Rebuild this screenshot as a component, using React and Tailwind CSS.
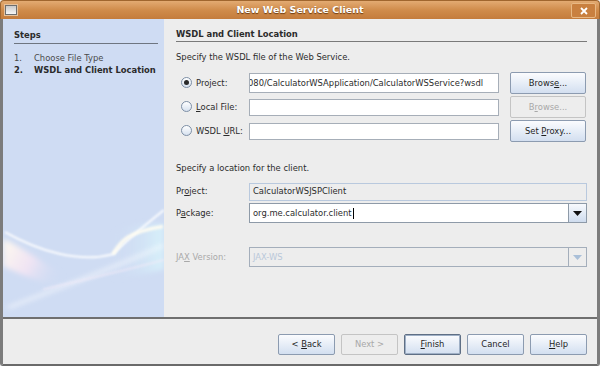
import React from "react";

const font = { fontFamily: '"DejaVu Sans", sans-serif' };

function U({ children }) {
  return <span className="underline underline-offset-1">{children}</span>;
}

function Btn({ children, disabled, main, className = "" }) {
  return (
    <div
      className={`flex items-center justify-center rounded-[2px] border ${
        disabled
          ? "border-[#c4c4c4] bg-[#ededed] text-[#a8a8a8]"
          : main
          ? "border-[#5f6f85] bg-gradient-to-b from-[#fbfcfe] to-[#d3dff0] text-[#1e1e1e] shadow-[inset_0_0_0_1px_#9fb0c6]"
          : "border-[#8c9bb0] bg-gradient-to-b from-[#fbfcfe] to-[#d3dff0] text-[#1e1e1e]"
      } ${className}`}
    >
      <span className="whitespace-pre">{children}</span>
    </div>
  );
}

function Radio({ checked }) {
  return (
    <div className="flex h-[11px] w-[11px] items-center justify-center rounded-full border border-[#7d8fa6] bg-gradient-to-b from-[#ffffff] to-[#d6e1ef]">
      {checked && <div className="h-[5px] w-[5px] rounded-full bg-[#2a2a2a]" />}
    </div>
  );
}

function Arrow({ light }) {
  return (
    <svg width="9" height="5" viewBox="0 0 9 5">
      <path d="M0 0 H9 L4.5 5 Z" fill={light ? "#a9bfd8" : "#111"} />
    </svg>
  );
}

function Swoosh() {
  return (
    <svg className="h-full w-full" viewBox="0 0 161 130" preserveAspectRatio="none">
      <defs>
        <linearGradient id="pk" x1="0" y1="0" x2="1" y2="0.4">
          <stop offset="0" stopColor="#fffbef" stopOpacity="1" />
          <stop offset="0.5" stopColor="#f8e6f3" stopOpacity="0.8" />
          <stop offset="1" stopColor="#cfdcf3" stopOpacity="0" />
        </linearGradient>
        <linearGradient id="cy" x1="0" y1="0" x2="1" y2="0">
          <stop offset="0" stopColor="#cfdcf3" stopOpacity="0" />
          <stop offset="1" stopColor="#d8f2fb" stopOpacity="1" />
        </linearGradient>
        <filter id="bl"><feGaussianBlur stdDeviation="1.2" /></filter>
        <filter id="bl2"><feGaussianBlur stdDeviation="3" /></filter>
      </defs>
      <path d="M0 45 L0 75 C20 85 45 95 65 100 L70 92 C45 75 20 55 0 45 Z" fill="url(#pk)" filter="url(#bl2)" />
      <path d="M110 40 C125 30 145 28 161 30 L161 78 C140 85 120 85 110 90 Z" fill="url(#cy)" filter="url(#bl2)" />
      <path d="M2 38 C35 58 75 72 110 62 C125 45 140 32 161 14" stroke="#ffffff" strokeWidth="2.2" fill="none" filter="url(#bl)" opacity="0.9" />
      <path d="M110 62 C118 48 124 38 160 32" stroke="#fffdf2" strokeWidth="4" fill="none" filter="url(#bl)" opacity="0.9" />
      <path d="M5 120 C50 100 95 85 161 52" stroke="#ffffff" strokeWidth="3" fill="none" filter="url(#bl2)" opacity="0.7" />
      <path d="M40 100 C80 90 120 80 161 68" stroke="#f6ecf8" strokeWidth="2" fill="none" filter="url(#bl)" opacity="0.6" />
    </svg>
  );
}

export default function App() {
  return (
    <div className="flex h-[366px] w-[600px] flex-col bg-[#ededed] text-[8.4px] text-[#2b2b2b]" style={font}>
      {/* title bar */}
      <div className="relative flex h-[19px] shrink-0 items-center justify-center rounded-t-[4px] border border-b-0 border-[#a0662e] bg-gradient-to-b from-[#e3ab72] via-[#d08c4b] to-[#c47c3c]">
        <div className="absolute left-[4px] top-[4px] h-[10px] w-[12px] border border-[#6e6e6e] bg-gradient-to-b from-[#c9c9c9] to-[#f6f6f6] shadow-[0_0_0_1px_#e6c29c]" />
        <span className="text-[9.5px] font-bold text-white [text-shadow:0_1px_1px_#6b3a12]">New Web Service Client</span>
        <div className="absolute right-[3px] top-[2px] flex h-[15px] w-[25px] items-center justify-center rounded-[2px] border border-[#e8b883] bg-[#c9803f]">
          <svg width="8" height="8" viewBox="0 0 8 8">
            <path d="M1 1 L7 7 M7 1 L1 7" stroke="#fff" strokeWidth="1.8" />
          </svg>
        </div>
      </div>

      {/* body */}
      <div className="flex flex-1 flex-col rounded-b-[3px] border-x-[3px] border-b-[2px] border-x-[#7c7c7c] border-b-[#6a6a6a]">
        <div className="flex h-[300px] border-b-2 border-[#6f6f6f]">
          {/* steps */}
          <div className="flex w-[161px] flex-col bg-[#cfdcf3]">
            <div className="pl-[11px] pr-[6px] pt-[10px]">
              <div className="border-b border-[#6e7580] pb-[2px] font-bold leading-[12px]">Steps</div>
              <div className="mt-[8px] flex whitespace-nowrap leading-[12px] text-[#4a4a4a]">
                <span className="w-[20px]">1.</span>
                <span>Choose File Type</span>
              </div>
              <div className="flex whitespace-nowrap font-bold leading-[12px]">
                <span className="w-[20px]">2.</span>
                <span>WSDL and Client Location</span>
              </div>
            </div>
            <div className="mt-auto h-[120px]">
              <Swoosh />
            </div>
          </div>

          {/* content */}
          <div className="flex flex-1 flex-col pl-[12px] pr-[10px] pt-[9px]">
            <div className="border-b border-[#7a7a7a] pb-[1px] font-bold leading-[12px]">WSDL and Client Location</div>
            <div className="mt-[9px] leading-[12px]">Specify the WSDL file of the Web Service.</div>

            <div className="mt-[9px] flex h-[22px] items-center">
              <div className="flex w-[73px] items-center gap-[4px] pl-[5px]">
                <Radio checked />
                <span>Project:</span>
              </div>
              <div className="flex h-[20px] w-[250px] items-center overflow-hidden whitespace-nowrap border border-[#a6aeb8] bg-white px-[2px]">
                <span className="-ml-[4px]">080/CalculatorWSApplication/CalculatorWSService?wsdl</span>
              </div>
              <Btn className="ml-[11px] h-[22px] w-[76px]">Brows<U>e</U>...</Btn>
            </div>

            <div className="mt-[2px] flex h-[22px] items-center">
              <div className="flex w-[73px] items-center gap-[4px] pl-[5px]">
                <Radio />
                <span><U>L</U>ocal File:</span>
              </div>
              <div className="h-[17px] w-[250px] border border-[#a6aeb8] bg-white" />
              <Btn disabled className="ml-[11px] h-[22px] w-[76px]">B<U>r</U>owse...</Btn>
            </div>

            <div className="mt-[2px] flex h-[22px] items-center">
              <div className="flex w-[73px] items-center gap-[4px] pl-[5px]">
                <Radio />
                <span className="whitespace-pre">WSDL <U>U</U>RL:</span>
              </div>
              <div className="h-[17px] w-[250px] border border-[#a6aeb8] bg-white" />
              <Btn className="ml-[11px] h-[22px] w-[76px]">Set <U>P</U>roxy...</Btn>
            </div>

            <div className="mt-[20px] leading-[12px]">Specify a location for the client.</div>

            <div className="mt-[8px] flex h-[19px] items-center">
              <span className="w-[73px]">Pr<U>o</U>ject:</span>
              <div className="flex h-[18px] flex-1 items-center border border-[#b9c9de] bg-[#ededed] px-[3px]">CalculatorWSJSPClient</div>
            </div>

            <div className="mt-[2px] flex h-[20px] items-center">
              <span className="w-[73px]">P<U>a</U>ckage:</span>
              <div className="flex h-[20px] flex-1 border border-[#8e9aa8] bg-white">
                <div className="flex flex-1 items-center px-[3px]">
                  org.me.calculator.client<span className="ml-[1px] h-[11px] w-px bg-black" />
                </div>
                <div className="flex w-[18px] items-center justify-center border-l border-[#8e9aa8] bg-gradient-to-b from-[#f8fafd] to-[#cfdcee]">
                  <Arrow />
                </div>
              </div>
            </div>

            <div className="mt-[24px] flex h-[20px] items-center text-[#a9a9a9]">
              <span className="w-[73px]">JA<U>X</U> Version:</span>
              <div className="flex h-[20px] flex-1 border border-[#a4aebb] bg-[#ededed]">
                <div className="flex flex-1 items-center px-[3px] text-[#b9c8da]">JAX-WS</div>
                <div className="flex w-[18px] items-center justify-center border-l border-[#a4aebb] bg-[#ededed]">
                  <Arrow light />
                </div>
              </div>
            </div>
          </div>
        </div>

        {/* buttons */}
        <div className="flex flex-1 items-center justify-end gap-[6px] pr-[10px] pt-[6px]">
          <Btn className="h-[21px] w-[57px]">&lt; <U>B</U>ack</Btn>
          <Btn disabled className="h-[21px] w-[57px]">Next &gt;</Btn>
          <Btn main className="h-[21px] w-[57px]"><U>F</U>inish</Btn>
          <Btn className="h-[21px] w-[57px]">Cancel</Btn>
          <Btn className="h-[21px] w-[57px]"><U>H</U>elp</Btn>
        </div>
      </div>
    </div>
  );
}
